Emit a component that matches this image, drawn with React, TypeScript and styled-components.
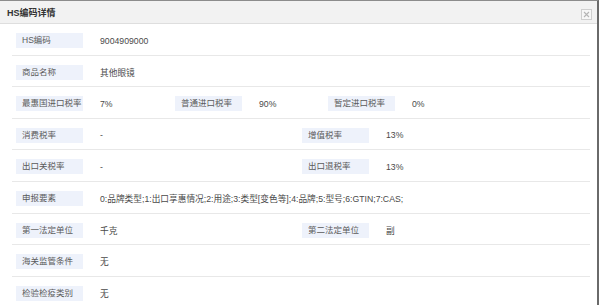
import * as React from "react"
import styled, { createGlobalStyle } from "styled-components"

const GlobalStyle = createGlobalStyle`
  html, body {
    margin: 0;
    padding: 0;
    background: #ffffff;
  }
  body {
    font-family: "Liberation Sans", "Noto Sans CJK SC", sans-serif;
  }
`

const Dialog = styled.div`
  width: 599px;
  height: 305px;
  box-sizing: border-box;
  overflow: hidden;
  background: #fff;
  border-top: 1px solid #8c8c8c;
  border-right: 2px solid #6a6a6a;
`

const Header = styled.div`
  height: 22px;
  display: flex;
  align-items: center;
  justify-content: space-between;
  padding: 0 5px 0 7px;
  background: #f2f2f2;
  border-bottom: 1px solid #dedede;
`

const Title = styled.div`
  font-size: 9px;
  font-weight: bold;
  color: #333;
`

const CloseButton = styled.div`
  width: 9px;
  height: 9px;
  border: 1px solid #cfcfcf;
  background: #f7f7f7;
  display: flex;
  align-items: center;
  justify-content: center;
  margin-top: 5px;
`

const Body = styled.div`
  padding: 0 7px 0 12px;
`

const Row = styled.div<{ $cols: string }>`
  display: grid;
  grid-template-columns: ${p => p.$cols};
  padding: 9px 0 6.6px 4px;
  border-bottom: 1px solid #e8e8e8;
`

const Field = styled.div`
  display: flex;
  align-items: center;
  min-width: 0;
`

const Label = styled.div`
  flex: none;
  width: 67px;
  height: 15px;
  box-sizing: border-box;
  padding-left: 6px;
  line-height: 15px;
  font-size: 8.5px;
  color: #5a5a5a;
  background: #eef2fb;
  white-space: nowrap;
`

const Value = styled.div`
  margin-left: 17px;
  font-size: 8.7px;
  color: #4a4a4a;
  white-space: nowrap;
`

type Item = [string, string]

const COLS: Record<number, string> = {
  1: "1fr",
  2: "286px 1fr",
  3: "159px 153px 1fr",
}

const rows: Item[][] = [
  [["HS编码", "9004909000"]],
  [["商品名称", "其他眼镜"]],
  [
    ["最惠国进口税率", "7%"],
    ["普通进口税率", "90%"],
    ["暂定进口税率", "0%"],
  ],
  [
    ["消费税率", "-"],
    ["增值税率", "13%"],
  ],
  [
    ["出口关税率", "-"],
    ["出口退税率", "13%"],
  ],
  [["申报要素", "0:品牌类型;1:出口享惠情况;2:用途;3:类型[变色等];4:品牌;5:型号;6:GTIN;7:CAS;"]],
  [
    ["第一法定单位", "千克"],
    ["第二法定单位", "副"],
  ],
  [["海关监管条件", "无"]],
  [["检验检疫类别", "无"]],
]

export default function App() {
  return (
    <>
      <GlobalStyle />
      <Dialog>
        <Header>
          <Title>HS编码详情</Title>
          <CloseButton>
            <svg width="7" height="7" viewBox="0 0 7 7">
              <path d="M1 1L6 6M6 1L1 6" stroke="#b5b5b5" strokeWidth="1.1" />
            </svg>
          </CloseButton>
        </Header>
        <Body>
          {rows.map((row, i) => (
            <Row key={i} $cols={COLS[row.length]}>
              {row.map(([label, value]) => (
                <Field key={label}>
                  <Label>{label}</Label>
                  <Value>{value}</Value>
                </Field>
              ))}
            </Row>
          ))}
        </Body>
      </Dialog>
    </>
  )
}
